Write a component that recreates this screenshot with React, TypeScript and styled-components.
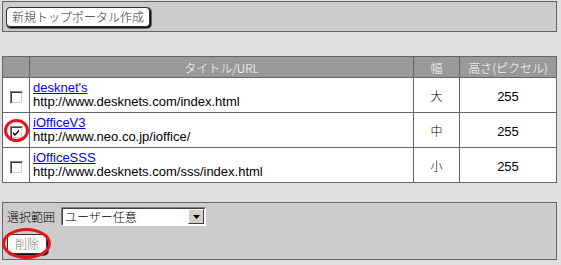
import React from 'react';
import styled, { createGlobalStyle } from 'styled-components';

const GlobalStyle = createGlobalStyle`
  body {
    margin: 0;
    background: #e0dfdf;
    font-family: "Noto Sans CJK JP", sans-serif;
    font-size: 12px;
    font-weight: 300;
    color: #000;
  }
`;

const Page = styled.div`
  width: 555px;
  padding: 1px 0 0 2px;
  display: flex;
  flex-direction: column;
`;

const TopPanel = styled.div`
  background: #cccccc;
  border: 1px solid #666666;
  padding: 5px 3px 1px;
  height: 23px;
`;

const RoundButton = styled.button<{ $dim?: boolean }>`
  height: 20px;
  padding: 0 ${p => (p.$dim ? 7 : 5)}px;
  margin: 0;
  background: #fff;
  border: 1px solid #333;
  border-radius: 4px;
  box-shadow: 1px 1px 0 #111, 1px 1px 0 1px #666;
  font-family: "Noto Sans CJK JP", sans-serif;
  font-size: 12px;
  font-weight: 300;
  line-height: 18px;
  color: ${p => (p.$dim ? '#7a7a7a' : '#333')};
  cursor: pointer;
`;

const Grid = styled.table`
  margin-top: 24px;
  width: 555px;
  border-collapse: collapse;
  background: #fff;
`;

const HeadCell = styled.th<{ $w: number }>`
  width: ${p => p.$w}px;
  height: 20px;
  padding: 0;
  background: #999999;
  color: #fff;
  font-weight: 300;
  text-align: center;
  border: 1px solid #666666;
  font-size: 12px;
`;

const Row = styled.tr`
  height: 35px;
`;

const Cell = styled.td<{ $center?: boolean }>`
  position: relative;
  padding: 0 3px;
  border: 1px solid #666666;
  text-align: ${p => (p.$center ? 'center' : 'left')};
  vertical-align: middle;
`;

const BoxCell = styled.td`
  position: relative;
  padding: 0;
  border: 1px solid #666666;
  text-align: center;
  vertical-align: middle;
`;

const Check = styled.span`
  position: relative;
  display: inline-block;
  width: 13px;
  height: 13px;
  box-sizing: border-box;
  margin: 2px 0 0 1px;
  background: #fff;
  border: 1px solid;
  border-color: #808080 #ffffff #ffffff #808080;
  box-shadow: inset 1px 1px 0 #404040, inset -1px -1px 0 #d4d0c8;
  vertical-align: middle;
  svg {
    position: absolute;
    left: 1px;
    top: 1px;
  }
`;

const Ring = styled.span`
  position: absolute;
  left: 1px;
  top: 50%;
  margin-top: -11px;
  width: 25px;
  height: 23px;
  box-sizing: border-box;
  border: 3px solid #e8141c;
  border-radius: 50%;
  pointer-events: none;
`;

const Title = styled.a`
  display: block;
  color: #0000ff;
  text-decoration: underline;
  font-family: "Liberation Sans", "Noto Sans CJK JP", sans-serif;
  font-size: 13px;
  line-height: 14px;
`;

const Url = styled.div`
  font-family: "Liberation Sans", "Noto Sans CJK JP", sans-serif;
  font-size: 13px;
  line-height: 14px;
`;

const Num = styled.span`
  font-family: "Liberation Sans", sans-serif;
  font-size: 13px;
`;

const BottomPanel = styled.div`
  margin-top: 19px;
  background: #cccccc;
  border: 1px solid #666666;
  padding: 4px 4px 5px;
  display: flex;
  flex-direction: column;
  gap: 8px;
`;

const ScopeRow = styled.div`
  display: flex;
  align-items: center;
  gap: 6px;
`;

const Select = styled.div`
  display: flex;
  width: 145px;
  height: 19px;
  box-sizing: border-box;
  background: #fff;
  border: 1px solid;
  border-color: #808080 #ffffff #ffffff #808080;
  box-shadow: inset 1px 1px 0 #404040;
`;

const SelectText = styled.span`
  flex: 1;
  padding: 0 3px;
  line-height: 17px;
  font-size: 12px;
`;

const Arrow = styled.span`
  width: 16px;
  margin: 1px 1px 1px 0;
  box-sizing: border-box;
  background: #d4d0c8;
  border: 1px solid;
  border-color: #ffffff #404040 #404040 #ffffff;
  display: flex;
  align-items: center;
  justify-content: center;
`;

const ButtonWrap = styled.div`
  position: relative;
  align-self: flex-start;
`;

const Oval = styled.span`
  position: absolute;
  left: -5px;
  top: -6px;
  width: 49px;
  height: 31px;
  box-sizing: border-box;
  border: 3px solid #e8141c;
  border-radius: 50%;
  pointer-events: none;
`;

type Item = { title: string; url: string; width: string; height: number; checked?: boolean };

const items: Item[] = [
  { title: "desknet's", url: 'http://www.desknets.com/index.html', width: '大', height: 255 },
  { title: 'iOfficeV3', url: 'http://www.neo.co.jp/ioffice/', width: '中', height: 255, checked: true },
  { title: 'iOfficeSSS', url: 'http://www.desknets.com/sss/index.html', width: '小', height: 255 },
];

export default function App() {
  return (
    <Page>
      <GlobalStyle />
      <TopPanel>
        <RoundButton>新規トップポータル作成</RoundButton>
      </TopPanel>

      <Grid>
        <thead>
          <tr>
            <HeadCell $w={26}></HeadCell>
            <HeadCell $w={383}>タイトル/URL</HeadCell>
            <HeadCell $w={45}>幅</HeadCell>
            <HeadCell $w={96}>高さ(ピクセル)</HeadCell>
          </tr>
        </thead>
        <tbody>
          {items.map(it => (
            <Row key={it.title}>
              <BoxCell>
                <Check>
                  {it.checked && (
                    <svg width="9" height="9" viewBox="0 0 9 9">
                      <path d="M1 4 L3 6 L7 1.5 L7 3.5 L3 8 L1 6 Z" fill="#000" />
                    </svg>
                  )}
                </Check>
                {it.checked && <Ring />}
              </BoxCell>
              <Cell>
                <Title href="#">{it.title}</Title>
                <Url>{it.url}</Url>
              </Cell>
              <Cell $center>{it.width}</Cell>
              <Cell $center>
                <Num>{it.height}</Num>
              </Cell>
            </Row>
          ))}
        </tbody>
      </Grid>

      <BottomPanel>
        <ScopeRow>
          <span>選択範囲</span>
          <Select>
            <SelectText>ユーザー任意</SelectText>
            <Arrow>
              <svg width="7" height="4" viewBox="0 0 7 4">
                <path d="M0 0 H7 L3.5 4 Z" fill="#000" />
              </svg>
            </Arrow>
          </Select>
        </ScopeRow>
        <ButtonWrap>
          <RoundButton $dim>削除</RoundButton>
          <Oval />
        </ButtonWrap>
      </BottomPanel>
    </Page>
  );
}
